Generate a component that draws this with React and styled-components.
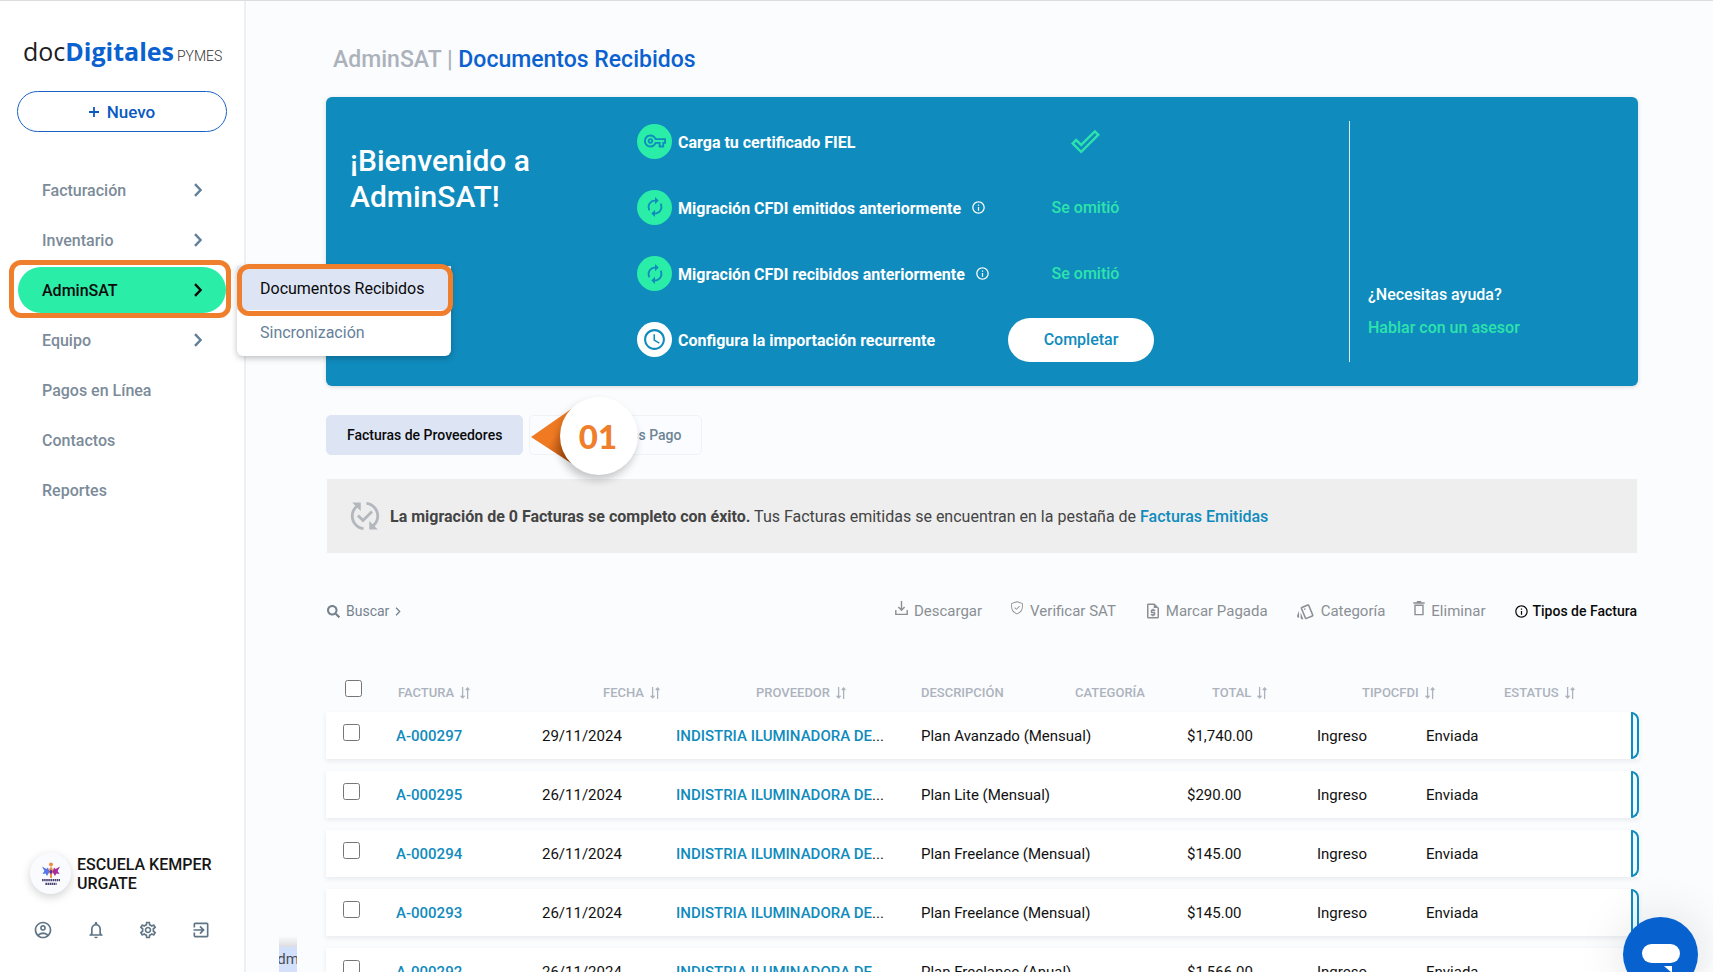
import React from "react";
import styled, { createGlobalStyle, css } from "styled-components";
import {
  MdAutorenew,
  MdDoneOutline,
  MdExitToApp,
  MdInfoOutline,
  MdOutlineAccountCircle,
  MdOutlineNotifications,
  MdOutlineRequestQuote,
  MdOutlineSettings,
  MdOutlineStyle,
  MdOutlineVpnKey,
  MdPublishedWithChanges,
  MdSchedule,
} from "react-icons/md";
import { FaSearch } from "react-icons/fa";
import { GoShieldCheck } from "react-icons/go";

const GlobalStyle = createGlobalStyle`
  *, *::before, *::after { box-sizing: border-box; }
  body {
    margin: 0;
    background: #fff;
    color: #111;
    font-family: Roboto, "Liberation Sans", sans-serif;
    font-size: 15px;
  }
  button, input { font-family: inherit; margin: 0; }
  button { cursor: pointer; }
  a { text-decoration: none; color: inherit; }
  h1, h2, p, ul { margin: 0; padding: 0; font-weight: inherit; }
  ul { list-style: none; }
  svg { display: block; flex: none; }
`;

const Page = styled.div`
  position: relative;
  display: flex;
  height: 100vh;
  overflow: hidden;
  border-top: 1px solid #dcdddf;
`;

/* ---------- Sidebar ---------- */

const Sidebar = styled.aside`
  position: relative;
  z-index: 2;
  flex: none;
  width: 246px;
  display: flex;
  flex-direction: column;
  background: #fff;
  border-right: 2px solid #eeeff1;
`;

const Logo = styled.a`
  display: flex;
  align-items: baseline;
  margin: 30px 0 0 23px;
  height: 42px;
  line-height: 40px;
  font-family: "Open Sans", "Noto Sans", sans-serif;
  font-size: 25px;
  color: #1d1d1f;
`;

const LogoStrong = styled.strong`
  color: #0a61cf;
`;

const LogoTag = styled.small`
  margin-left: 3px;
  font-family: Roboto, sans-serif;
  font-size: 14px;
  font-weight: 300;
  color: #333;
`;

const NewButton = styled.button`
  display: flex;
  align-items: center;
  justify-content: center;
  gap: 8px;
  margin: 18px 17px 0;
  height: 41px;
  border: 1px solid #1a62c6;
  border-radius: 21px;
  background: #fff;
  color: #0b5ac2;
  font-size: 17px;
  font-weight: 500;
`;

const Nav = styled.nav`
  margin: 35px 18px 0;
`;

const NavList = styled.ul`
  display: flex;
  flex-direction: column;
  gap: 4px;
`;

const NavItem = styled.li`
  position: relative;
`;

const NavLink = styled.a`
  display: flex;
  align-items: center;
  justify-content: space-between;
  height: 46px;
  padding: 0 24px;
  border-radius: 23px;
  font-size: 16px;
  font-weight: 500;
  color: ${(p) => (p.$active ? "#0a0a0a" : "#7c8b99")};
  background: ${(p) => (p.$active ? "#2aeda8" : "transparent")};
  svg { color: ${(p) => (p.$active ? "#0a0a0a" : "#5f7f9c")}; }
`;

const Submenu = styled.ul`
  position: absolute;
  top: -1px;
  left: 219px;
  width: 214px;
  padding-bottom: 2px;
  background: #fff;
  border-radius: 0 0 6px 6px;
  box-shadow: 0 2px 6px rgba(0, 0, 0, 0.25);
`;

const SubmenuLink = styled.a`
  display: flex;
  align-items: center;
  height: 44px;
  padding-left: 23px;
  font-size: 16px;
  color: ${(p) => (p.$active ? "#0a0a0a" : "#66809b")};
  background: ${(p) => (p.$active ? "#dde5f5" : "transparent")};
`;

const Highlight = styled.span`
  position: absolute;
  inset: ${(p) => p.$inset};
  border: 5px solid #ef7f2d;
  border-radius: 12px;
  pointer-events: none;
`;

const Account = styled.div`
  margin-top: auto;
  padding: 0 30px 32px;
`;

const AccountName = styled.div`
  display: flex;
  align-items: center;
  gap: 6px;
  font-size: 16px;
  line-height: 19px;
  font-weight: 500;
  color: #161616;
`;

const Avatar = styled.span`
  flex: none;
  display: grid;
  place-items: center;
  width: 41px;
  height: 41px;
  border-radius: 50%;
  background: #fafbff;
  box-shadow: 0 3px 10px rgba(0, 0, 0, 0.18);
`;

const AccountTools = styled.div`
  display: flex;
  justify-content: space-between;
  margin-top: 26px;
  padding: 0 3px;
`;

const ToolButton = styled.button`
  padding: 0;
  border: 0;
  background: none;
  color: #5f7485;
  font-size: 20px;
`;

/* ---------- Main ---------- */

const Main = styled.main`
  flex: 1;
  min-width: 0;
  padding: 39px 75px 0 80px;
  background: #fafcfe;
  border-bottom-right-radius: 16px;
  overflow: hidden;
`;

const Heading = styled.h1`
  padding-left: 7px;
  line-height: 40px;
  font-size: 23px;
  font-weight: 500;
  color: #acb2bb;
`;

const HeadingCurrent = styled.span`
  color: #0a61cf;
`;

const Banner = styled.section`
  display: grid;
  grid-template-columns: 287fr 366fr 346fr 265fr;
  margin-top: 17px;
  padding: 24px;
  border-radius: 6px;
  background: #108bbd;
  color: #fff;
  box-shadow: 0 1px 4px rgba(0, 0, 0, 0.15);
`;

const Welcome = styled.h2`
  padding: 22px 80px 0 0;
  font-size: 30px;
  line-height: 36px;
  font-weight: 500;
`;

const Steps = styled.ul`
  grid-column: span 2;
  display: flex;
  flex-direction: column;
  justify-content: space-between;
  padding: 2px 0 4px;
`;

const Step = styled.li`
  display: grid;
  grid-template-columns: 366fr 346fr;
  grid-template-rows: 36px;
  align-items: center;
`;

const StepLabel = styled.div`
  display: flex;
  align-items: center;
  gap: 6px;
  font-size: 16px;
  font-weight: 700;
  white-space: nowrap;
`;

const StepText = styled.span`
  padding-top: 2px;
`;

const StepDot = styled.span`
  flex: none;
  display: grid;
  place-items: center;
  width: 35px;
  height: 35px;
  border-radius: 50%;
  background: ${(p) => (p.$pending ? "#fff" : "#2aeda8")};
  color: #108bbd;
`;

const InfoButton = styled.button`
  padding: 0;
  margin-left: 4px;
  border: 0;
  background: none;
  color: inherit;
  font-size: 15px;
`;

const StepStatus = styled.div`
  display: flex;
  align-items: center;
  justify-content: center;
  width: 165px;
  color: #2de3ac;
  font-size: 16px;
  font-weight: 500;
`;

const CompleteButton = styled.button`
  width: 146px;
  height: 44px;
  margin-right: 9px;
  border: 0;
  border-radius: 22px;
  background: #fff;
  color: #108bbd;
  font-size: 16px;
  font-weight: 500;
`;

const Help = styled.div`
  display: flex;
  flex-direction: column;
  justify-content: flex-end;
  height: 241px;
  padding: 0 0 18px 18px;
  border-left: 1px solid #d8ecf5;
  font-size: 16px;
  font-weight: 500;
  line-height: 33px;
`;

const HelpLink = styled.a`
  color: #2de3ac;
`;

const Tabs = styled.div`
  position: relative;
  display: flex;
  gap: 6px;
  margin-top: 29px;
`;

const Tab = styled.button`
  height: 40px;
  padding: 0 20px;
  border: 1px solid ${(p) => (p.$active ? "#dde5f5" : "#f0f2f6")};
  border-radius: 5px;
  background: ${(p) => (p.$active ? "#dde5f5" : "#fbfcff")};
  color: ${(p) => (p.$active ? "#0a0a0a" : "#6d8494")};
  font-size: 14px;
  font-weight: 500;
`;

const Callout = styled.div`
  position: absolute;
  left: 205px;
  top: -18px;
  display: flex;
  align-items: center;
`;

const CalloutDisc = styled.span`
  display: grid;
  place-items: center;
  width: 78px;
  height: 78px;
  margin-left: -23px;
  padding-right: 2px;
  border-radius: 50%;
  background: #fff;
  box-shadow: -2px 5px 8px rgba(0, 0, 0, 0.22);
  color: #ef7f2d;
  font-family: Lato, sans-serif;
  font-size: 33px;
  font-weight: 900;
`;

const Notice = styled.p`
  display: flex;
  align-items: center;
  gap: 8px;
  min-height: 74px;
  margin: 24px 1px 0;
  padding: 0 21px;
  background: #eee;
  color: #444;
  font-size: 16px;
  svg { color: #b3b8be; }
`;

const NoticeLink = styled.a`
  color: #108bbd;
  font-weight: 500;
`;

const Toolbar = styled.div`
  display: flex;
  align-items: center;
  justify-content: space-between;
  margin: 46px 1px 0;
  height: 24px;
`;

const Actions = styled.div`
  display: flex;
  gap: 28px;
`;

const Action = styled.button`
  display: flex;
  align-items: center;
  gap: 6px;
  padding: 0;
  border: 0;
  background: none;
  color: #8b8f93;
  font-size: 15px;
  white-space: nowrap;
  ${(p) => p.$raised && css`svg { margin-bottom: 6px; }`}
  ${(p) => p.$tight && css`gap: 4px;`}
  ${(p) => p.$strong && css`
    gap: 4px;
    color: #0a0a0a;
    font-size: 14px;
    font-weight: 500;
  `}
  ${(p) => p.$search && css`
    color: #76828e;
    font-size: 14px;
  `}
`;

/* ---------- Table ---------- */

const Table = styled.table`
  width: 100%;
  margin-top: 24px;
  table-layout: fixed;
  border-collapse: separate;
  border-spacing: 0 12px;
`;

const HeadCell = styled.th`
  height: 41px;
  padding: 0 0 0 ${(p) => p.$indent}px;
  vertical-align: bottom;
  text-align: left;
  line-height: 14px;
  font-size: 13px;
  font-weight: 500;
  color: #adb3bd;
  white-space: nowrap;
`;

const SortButton = styled.button`
  display: flex;
  align-items: center;
  gap: 6px;
  padding: 0;
  border: 0;
  background: none;
  color: inherit;
  font: inherit;
`;

const Row = styled.tr`
  background: #fff;
  box-shadow: 0 2px 5px rgba(30, 40, 60, 0.08);
`;

const Cell = styled.td`
  height: 47px;
  padding: 0;
  white-space: nowrap;
  font-size: 15px;
  color: #111;
`;

const CellLink = styled.a`
  color: #108bbd;
  font-weight: 500;
`;

const Check = styled.input`
  display: block;
  width: 17px;
  height: 17px;
  margin: 0 0 ${(p) => (p.$head ? 3 : 7)}px ${(p) => (p.$head ? 19 : 17)}px;
`;

const StatusBar = styled.span`
  display: block;
  width: 8px;
  height: 47px;
  border: 2px solid #108bbd;
  border-radius: 0 8px 8px 0;
  background: #eefbff;
`;

/* ---------- Floating parts ---------- */

const ChatButton = styled.button`
  position: absolute;
  z-index: 3;
  right: 15px;
  bottom: -20px;
  width: 75px;
  height: 75px;
  padding: 0;
  border: 0;
  border-radius: 50%;
  background: #0762d0;
  box-shadow: 0 0 50px rgba(0, 0, 0, 0.12);
`;

const LinkPreview = styled.div`
  position: absolute;
  z-index: 1;
  left: 279px;
  bottom: 0;
  display: flex;
  justify-content: center;
  width: 18px;
  height: 35px;
  padding-top: 10px;
  overflow: hidden;
  background: linear-gradient(#f7f8fa, #dcdde0 10px, #d3e0fb 10px);
  color: #4a4f58;
  font-size: 15px;
  line-height: 24px;
`;

const Chevron = ({ width = 8, height = 14, stroke = 2.4 }) => (
  <svg width={width} height={height} viewBox="0 0 8 14" fill="none" stroke="currentColor" strokeWidth={stroke}>
    <path d="M1 1.2 6.6 7 1 12.8" />
  </svg>
);

const SortIcon = () => (
  <svg width="10" height="12" viewBox="0 0 10 12" fill="none" stroke="currentColor" strokeWidth="1.3">
    <path d="M2.6 0v10M.6 8.8l2 2 2-2M7.6 12V1.6M5.8 3 7.6 1l1.8 2" />
  </svg>
);

const DownloadIcon = () => (
  <svg width="13" height="15" viewBox="0 0 13 15" fill="none" stroke="currentColor" strokeWidth="1.4">
    <path d="M6.5 0v9M3.4 6l3.1 3.2L9.6 6M.8 9v4.4h11.4V9" />
  </svg>
);

const TrashIcon = () => (
  <svg width="12" height="15" viewBox="0 0 12 15" fill="none" stroke="currentColor" strokeWidth="1.4">
    <path d="M.3 2h11.4M3.8.7h4.4M2 4.2h8v9.4H2z" />
  </svg>
);

const SchoolLogo = () => (
  <svg width="20" height="24" viewBox="0 0 20 24">
    <circle cx="10" cy="2.4" r="2" fill="#f08a3c" />
    <path d="M10 4.6 13 9l-2 3v4H9v-4L7 9z" fill="#ef8e45" />
    <path d="M1 4.6 5.4 7 7 5.4 8.4 10 6 14 4.6 11.4 1.4 12 3.4 9z" fill="#5577ea" />
    <path d="M19 4.6 14.6 7 13 5.4 11.6 10 14 14l1.4-2.6 3.2.6-2-3z" fill="#a62ba0" />
    <path d="M8.4 9.6 10 7.4l1.6 2.2L10 12.4z" fill="#5c2d9c" />
    <path d="M1 18.2h18M4.4 21.8h11.2" stroke="#4a4472" strokeWidth="2.2" strokeDasharray="1.6 .5" />
  </svg>
);

const navItems = [
  { label: "Facturación", menu: true },
  { label: "Inventario", menu: true },
  { label: "AdminSAT", menu: true, active: true },
  { label: "Equipo", menu: true },
  { label: "Pagos en Línea" },
  { label: "Contactos" },
  { label: "Reportes" },
];

const columns = [
  { label: "FACTURA", width: 146, indent: 2, sort: true },
  { label: "FECHA", width: 134, indent: 61, sort: true },
  { label: "PROVEEDOR", width: 245, indent: 80, sort: true },
  { label: "DESCRIPCIÓN", width: 154, indent: 0 },
  { label: "CATEGORÍA", width: 112, indent: 0 },
  { label: "TOTAL", width: 130, indent: 25, sort: true },
  { label: "TIPOCFDI", width: 109, indent: 45, sort: true },
  { label: "ESTATUS", width: 205, indent: 78, sort: true },
];

const invoices = [
  { id: "A-000297", date: "29/11/2024", plan: "Plan Avanzado (Mensual)", total: "$1,740.00" },
  { id: "A-000295", date: "26/11/2024", plan: "Plan Lite (Mensual)", total: "$290.00" },
  { id: "A-000294", date: "26/11/2024", plan: "Plan Freelance (Mensual)", total: "$145.00" },
  { id: "A-000293", date: "26/11/2024", plan: "Plan Freelance (Mensual)", total: "$145.00" },
  { id: "A-000292", date: "26/11/2024", plan: "Plan Freelance (Anual)", total: "$1,566.00" },
];

const steps = [
  { label: "Carga tu certificado FIEL", icon: <MdOutlineVpnKey size={22} />, status: <MdDoneOutline size={29} /> },
  { label: "Migración CFDI emitidos anteriormente", icon: <MdAutorenew size={22} />, info: true, status: "Se omitió" },
  { label: "Migración CFDI recibidos anteriormente", icon: <MdAutorenew size={22} />, info: true, status: "Se omitió" },
  {
    label: "Configura la importación recurrente",
    icon: <MdSchedule size={25} />,
    pending: true,
    status: <CompleteButton type="button">Completar</CompleteButton>,
  },
];

export default function App() {
  return (
    <>
      <GlobalStyle />
      <Page>
        <Sidebar>
          <Logo href="#inicio">
            doc<LogoStrong>Digitales</LogoStrong>
            <LogoTag>PYMES</LogoTag>
          </Logo>
          <NewButton type="button">
            <svg width="10" height="10" viewBox="0 0 10 10" stroke="currentColor" strokeWidth="1.8">
              <path d="M5 0v10M0 5h10" />
            </svg>
            Nuevo
          </NewButton>
          <Nav aria-label="Principal">
            <NavList>
              {navItems.map((item) => (
                <NavItem key={item.label}>
                  <NavLink href="#menu" $active={item.active}>
                    {item.label}
                    {item.menu && <Chevron />}
                  </NavLink>
                  {item.active && (
                    <>
                      <Submenu>
                        <li>
                          <SubmenuLink href="#recibidos" $active>Documentos Recibidos</SubmenuLink>
                        </li>
                        <li>
                          <SubmenuLink href="#sincronizacion">Sincronización</SubmenuLink>
                        </li>
                        <Highlight as="li" aria-hidden="true" $inset="-2px -2px 40px 0" />
                      </Submenu>
                      <Highlight $inset="-7px -5px -5px -9px" />
                    </>
                  )}
                </NavItem>
              ))}
            </NavList>
          </Nav>
          <Account>
            <AccountName>
              <Avatar><SchoolLogo /></Avatar>
              <span>ESCUELA KEMPER URGATE</span>
            </AccountName>
            <AccountTools>
              <ToolButton type="button" aria-label="Perfil"><MdOutlineAccountCircle /></ToolButton>
              <ToolButton type="button" aria-label="Notificaciones"><MdOutlineNotifications /></ToolButton>
              <ToolButton type="button" aria-label="Ajustes"><MdOutlineSettings /></ToolButton>
              <ToolButton type="button" aria-label="Salir"><MdExitToApp /></ToolButton>
            </AccountTools>
          </Account>
        </Sidebar>

        <Main>
          <Heading>
            AdminSAT | <HeadingCurrent>Documentos Recibidos</HeadingCurrent>
          </Heading>

          <Banner>
            <Welcome>¡Bienvenido a AdminSAT!</Welcome>
            <Steps>
              {steps.map((step) => (
                <Step key={step.label}>
                  <StepLabel>
                    <StepDot $pending={step.pending}>{step.icon}</StepDot>
                    <StepText>{step.label}</StepText>
                    {step.info && (
                      <InfoButton type="button" aria-label="Más información"><MdInfoOutline /></InfoButton>
                    )}
                  </StepLabel>
                  <StepStatus>{step.status}</StepStatus>
                </Step>
              ))}
            </Steps>
            <Help>
              <p>¿Necesitas ayuda?</p>
              <HelpLink href="#asesor">Hablar con un asesor</HelpLink>
            </Help>
          </Banner>

          <Tabs>
            <Tab type="button" $active>Facturas de Proveedores</Tab>
            <Tab type="button">Complementos Pago</Tab>
            <Callout>
              <svg width="52" height="66" viewBox="0 0 52 66">
                <defs>
                  <linearGradient id="tip" x1="0" y1="0" x2="1" y2="1">
                    <stop offset=".5" stopColor="#f07a22" />
                    <stop offset=".85" stopColor="#a8480a" />
                  </linearGradient>
                </defs>
                <path d="M0 34 46 2v62z" fill="url(#tip)" />
              </svg>
              <CalloutDisc>01</CalloutDisc>
            </Callout>
          </Tabs>

          <Notice>
            <MdPublishedWithChanges size={34} />
            <span>
              <strong>La migración de 0 Facturas se completo con éxito.</strong> Tus Facturas emitidas se encuentran en
              la pestaña de <NoticeLink href="#emitidas">Facturas Emitidas</NoticeLink>
            </span>
          </Notice>

          <Toolbar>
            <Action type="button" $search>
              <FaSearch size={13} />
              Buscar
              <Chevron width={6} height={9} stroke={2} />
            </Action>
            <Actions>
              <Action type="button" $raised><DownloadIcon />Descargar</Action>
              <Action type="button" $raised><GoShieldCheck size={14} />Verificar SAT</Action>
              <Action type="button" $tight><MdOutlineRequestQuote size={18} />Marcar Pagada</Action>
              <Action type="button"><MdOutlineStyle size={19} />Categoría</Action>
              <Action type="button" $raised><TrashIcon />Eliminar</Action>
              <Action type="button" $strong><MdInfoOutline size={15} />Tipos de Factura</Action>
            </Actions>
          </Toolbar>

          <Table>
            <colgroup>
              <col style={{ width: 70 }} />
              {columns.map((column) => (
                <col key={column.label} style={{ width: column.width }} />
              ))}
              <col style={{ width: 8 }} />
            </colgroup>
            <thead>
              <tr>
                <HeadCell $indent={0}>
                  <Check type="checkbox" $head aria-label="Seleccionar todas" />
                </HeadCell>
                {columns.map((column) => (
                  <HeadCell key={column.label} $indent={column.indent}>
                    {column.sort ? (
                      <SortButton type="button">{column.label}<SortIcon /></SortButton>
                    ) : (
                      column.label
                    )}
                  </HeadCell>
                ))}
                <HeadCell as="td" $indent={0} />
              </tr>
            </thead>
            <tbody>
              {invoices.map((invoice) => (
                <Row key={invoice.id}>
                  <Cell><Check type="checkbox" aria-label={`Seleccionar ${invoice.id}`} /></Cell>
                  <Cell><CellLink href="#factura">{invoice.id}</CellLink></Cell>
                  <Cell>{invoice.date}</Cell>
                  <Cell><CellLink href="#proveedor">INDISTRIA ILUMINADORA DE</CellLink>...</Cell>
                  <Cell>{invoice.plan}</Cell>
                  <Cell />
                  <Cell>{invoice.total}</Cell>
                  <Cell>Ingreso</Cell>
                  <Cell>Enviada</Cell>
                  <Cell><StatusBar /></Cell>
                </Row>
              ))}
            </tbody>
          </Table>
        </Main>

        <LinkPreview>dm</LinkPreview>
        <ChatButton type="button" aria-label="Abrir chat">
          <svg width="75" height="75" viewBox="0 0 75 75" fill="#fff">
            <rect x="19" y="27" width="38" height="19" rx="9.5" />
            <path d="M41 49h8v7z" />
          </svg>
        </ChatButton>
      </Page>
    </>
  );
}
